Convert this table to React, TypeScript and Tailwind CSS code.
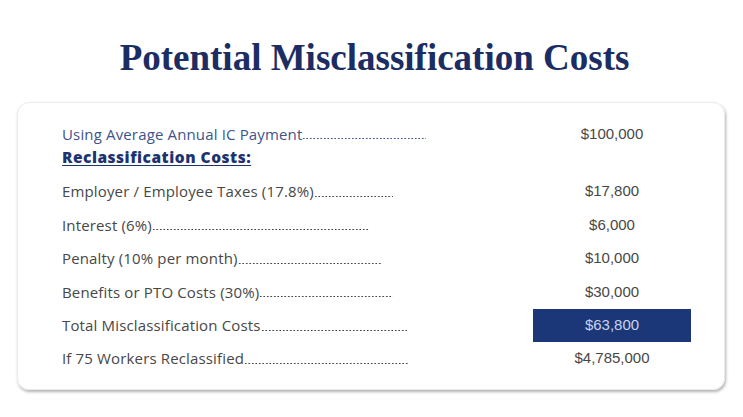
const rows = [
  { label: "Employer / Employee Taxes (17.8%)", width: "w-[331px]", value: "$17,800" },
  { label: "Interest (6%)", width: "w-[307px]", value: "$6,000" },
  { label: "Penalty (10% per month)", width: "w-[320px]", value: "$10,000" },
  { label: "Benefits or PTO Costs (30%)", width: "w-[331px]", value: "$30,000" },
  { label: "Total Misclassification Costs", width: "w-[345px]", value: "$63,800", highlight: true },
  { label: "If 75 Workers Reclassified", width: "w-[347px]", value: "$4,785,000" },
];

// dotted leader drawn as a repeating dot pattern so it always stops at the row's own end
function Leader({ label, width, className }: { label: string; width: string; className?: string }) {
  return (
    <div className={`flex items-end ${width} whitespace-nowrap ${className ?? ""}`}>
      <span>{label}</span>
      <span className="flex-1 h-[3px] mb-[5px] bg-[radial-gradient(circle,currentColor_0.6px,transparent_0.95px)] bg-[length:3.5px_3px] bg-repeat-x" />
    </div>
  );
}

export default function App() {
  return (
    <div className="w-[743px] h-[417px] bg-white overflow-hidden">
      <h1 className="pt-[39px] h-[65px] text-center text-[37px] leading-[37px] font-bold text-[#1b2d62] font-['Liberation_Serif',serif]">
        <span className="inline-block translate-x-[3px]">Potential Misclassification Costs</span>
      </h1>
      <div className="ml-[17px] mt-[37px] w-[708px] h-[288px] rounded-[12px] border border-[#ebebeb] shadow-[1px_2px_3px_rgba(0,0,0,0.3)] pt-[19px] pl-[44px] font-['Open_Sans',sans-serif] text-[15px]">
        <div className="flex items-center h-[24px]">
          <div className="w-[471px] tracking-[0.15px]">
            <Leader label="Using Average Annual IC Payment" width="w-[364px]" className="text-[#40548c]" />
          </div>
          <div className="w-[158px] text-center font-['Liberation_Sans',sans-serif] text-[#474747]">$100,000</div>
        </div>
        <div className="flex items-center h-[24px]">
          <span className="text-[15.5px] font-extrabold tracking-[0.5px] underline underline-offset-2 text-[#1d3370]">Reclassification Costs:</span>
        </div>
        <div className="mt-[5px]">
          {rows.map((r) => (
            <div key={r.label} className="flex items-center h-[33.4px]">
              <div className="w-[471px] tracking-[0.15px]">
                <Leader label={r.label} width={r.width} className="text-[#474747]" />
              </div>
              <div
                className={`w-[158px] h-full flex items-center justify-center font-['Liberation_Sans',sans-serif] ${
                  r.highlight ? "bg-[#1c3777] text-[#c9d3ee]" : "text-[#474747]"
                }`}
              >
                {r.value}
              </div>
            </div>
          ))}
        </div>
      </div>
    </div>
  );
}
